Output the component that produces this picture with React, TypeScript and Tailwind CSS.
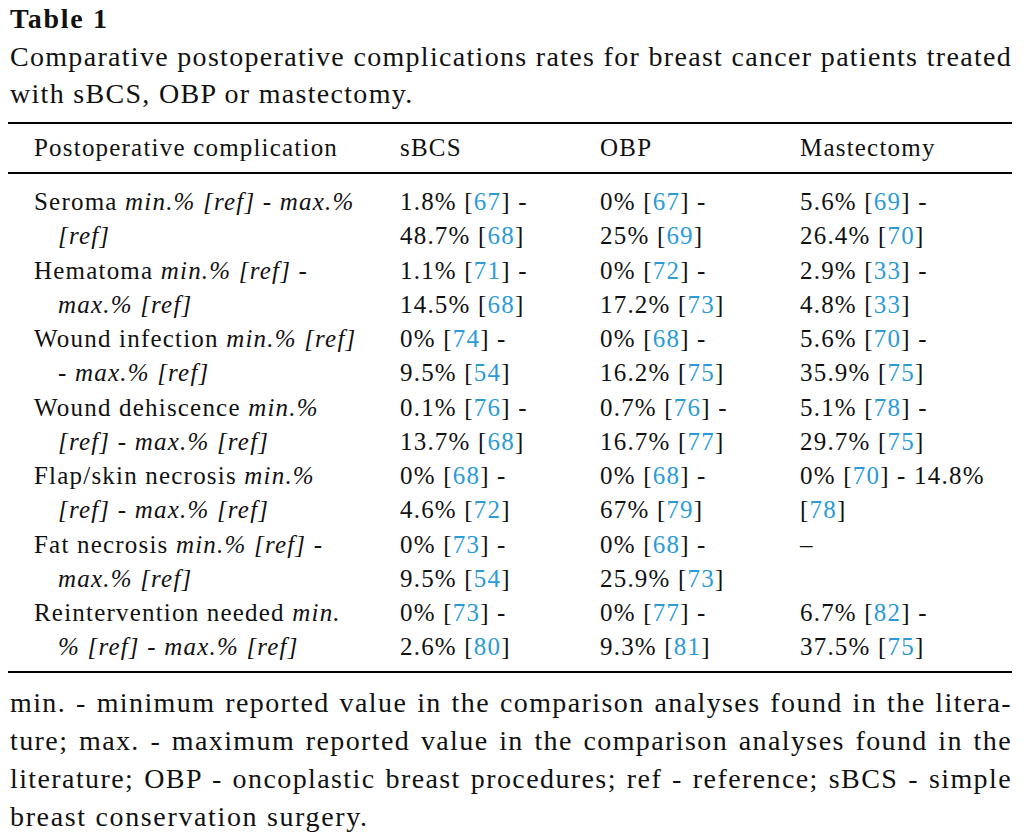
type Ref = [string, number | null, string];

interface Row {
  label: [React.ReactNode, React.ReactNode];
  cells: [Ref[], Ref[], Ref[]];
}

function Cite({ part }: { part: Ref }) {
  const [pre, ref, post] = part;
  return (
    <>
      {pre}
      {ref !== null && (
        <>
          [<span className="text-[#2b9bd8]">{ref}</span>]
        </>
      )}
      {post}
    </>
  );
}

const rows: Row[] = [
  {
    label: [<>Seroma <i>min.% [ref] - max.%</i></>, <i>[ref]</i>],
    cells: [
      [["1.8% ", 67, " -"], ["48.7% ", 68, ""]],
      [["0% ", 67, " -"], ["25% ", 69, ""]],
      [["5.6% ", 69, " -"], ["26.4% ", 70, ""]],
    ],
  },
  {
    label: [<>Hematoma <i>min.% [ref]</i> -</>, <i>max.% [ref]</i>],
    cells: [
      [["1.1% ", 71, " -"], ["14.5% ", 68, ""]],
      [["0% ", 72, " -"], ["17.2% ", 73, ""]],
      [["2.9% ", 33, " -"], ["4.8% ", 33, ""]],
    ],
  },
  {
    label: [<>Wound infection <i>min.% [ref]</i></>, <>- <i>max.% [ref]</i></>],
    cells: [
      [["0% ", 74, " -"], ["9.5% ", 54, ""]],
      [["0% ", 68, " -"], ["16.2% ", 75, ""]],
      [["5.6% ", 70, " -"], ["35.9% ", 75, ""]],
    ],
  },
  {
    label: [<>Wound dehiscence <i>min.%</i></>, <i>[ref] - max.% [ref]</i>],
    cells: [
      [["0.1% ", 76, " -"], ["13.7% ", 68, ""]],
      [["0.7% ", 76, " -"], ["16.7% ", 77, ""]],
      [["5.1% ", 78, " -"], ["29.7% ", 75, ""]],
    ],
  },
  {
    label: [<>Flap/skin necrosis <i>min.%</i></>, <i>[ref] - max.% [ref]</i>],
    cells: [
      [["0% ", 68, " -"], ["4.6% ", 72, ""]],
      [["0% ", 68, " -"], ["67% ", 79, ""]],
      [["0% ", 70, " - 14.8%"], ["", 78, ""]],
    ],
  },
  {
    label: [<>Fat necrosis <i>min.% [ref]</i> -</>, <i>max.% [ref]</i>],
    cells: [
      [["0% ", 73, " -"], ["9.5% ", 54, ""]],
      [["0% ", 68, " -"], ["25.9% ", 73, ""]],
      [["–", null, ""], ["", null, ""]],
    ],
  },
  {
    label: [<>Reintervention needed <i>min.</i></>, <i>% [ref] - max.% [ref]</i>],
    cells: [
      [["0% ", 73, " -"], ["2.6% ", 80, ""]],
      [["0% ", 77, " -"], ["9.3% ", 81, ""]],
      [["6.7% ", 82, " -"], ["37.5% ", 75, ""]],
    ],
  },
];

export default function App() {
  return (
    <div className="w-[1024px] h-[836px] bg-white text-[#111] font-['Liberation_Serif',serif] overflow-hidden">
      <div className="px-[8px] pr-[12px]">
        <h1 className="pl-[2px] text-[28px] font-bold leading-[38px] tracking-[1.7px]">Table 1</h1>
        <p className="pl-[2px] text-[28px] leading-[37px] tracking-[1.3px]">
          <span className="block text-justify [text-align-last:justify] whitespace-nowrap">
            Comparative postoperative complications rates for breast cancer patients treated
          </span>
          <span className="block">with sBCS, OBP or mastectomy.</span>
        </p>

        <div className="mt-[10px] border-t-2 border-b-2 border-black text-[25px] leading-[34px] tracking-[1.2px]">
          <div className="grid grid-cols-[392px_200px_200px_1fr] h-[50px] items-center border-b-2 border-black">
            <div className="pl-[26px]">Postoperative complication</div>
            <div>sBCS</div>
            <div>OBP</div>
            <div>Mastectomy</div>
          </div>
          <div className="pt-[11px] pb-[6px]">
            {rows.map((row, i) => (
              <div key={i} className="grid grid-cols-[392px_200px_200px_1fr] py-[0.25px]">
                <div className="pl-[26px] whitespace-nowrap">
                  <div>{row.label[0]}</div>
                  <div className="pl-[24px]">{row.label[1]}</div>
                </div>
                {row.cells.map((cell, j) => (
                  <div key={j}>
                    {cell.map((part, k) => (
                      <div key={k} className="whitespace-nowrap h-[34px]">
                        <Cite part={part} />
                      </div>
                    ))}
                  </div>
                ))}
              </div>
            ))}
          </div>
        </div>

        <div className="pl-[2px] pt-[11px] text-[28px] leading-[38.3px] tracking-[1.4px]">
          <div className="text-justify [text-align-last:justify] whitespace-nowrap">
            min. - minimum reported value in the comparison analyses found in the litera-
          </div>
          <div className="text-justify [text-align-last:justify] whitespace-nowrap">
            ture; max. - maximum reported value in the comparison analyses found in the
          </div>
          <div className="text-justify [text-align-last:justify] whitespace-nowrap">
            literature; OBP - oncoplastic breast procedures; ref - reference; sBCS - simple
          </div>
          <div className="tracking-[1.65px]">breast conservation surgery.</div>
        </div>
      </div>
    </div>
  );
}
